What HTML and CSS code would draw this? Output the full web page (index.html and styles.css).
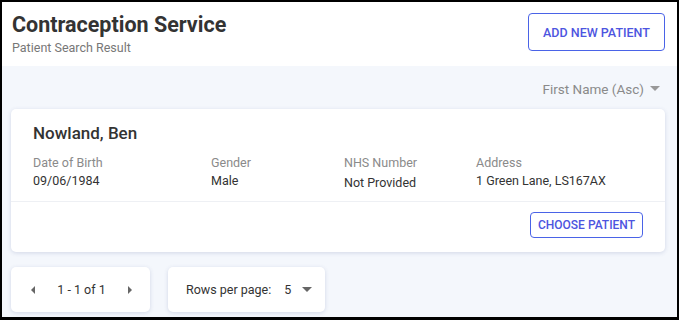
FILE: index.html
```html
<!DOCTYPE html>
<html lang="en">
<head>
    <meta charset="UTF-8">
    <title>Contraception Service</title>
    <link rel="stylesheet" href="styles.css">
</head>
<body>
    <div class="Page">
        <header class="Page-header">
            <div class="Page-titles">
                <h1 class="Page-title">Contraception Service</h1>
                <p class="Page-subtitle">Patient Search Result</p>
            </div>
            <button class="Btn Btn--large">ADD NEW PATIENT</button>
        </header>

        <main class="Results">
            <div class="Results-sort">
                <span>First Name (Asc)</span>
                <span class="Caret Caret--down"></span>
            </div>

            <div class="Card">
                <div class="Card-body">
                    <h2 class="Card-name">Nowland, Ben</h2>
                    <div class="Card-fields">
                        <div class="Field Field--dob">
                            <div class="Field-label">Date of Birth</div>
                            <div class="Field-value">09/06/1984</div>
                        </div>
                        <div class="Field Field--gender">
                            <div class="Field-label">Gender</div>
                            <div class="Field-value">Male</div>
                        </div>
                        <div class="Field Field--nhs">
                            <div class="Field-label">NHS Number</div>
                            <div class="Field-value Field-value--low">Not Provided</div>
                        </div>
                        <div class="Field">
                            <div class="Field-label">Address</div>
                            <div class="Field-value">1 Green Lane, LS167AX</div>
                        </div>
                    </div>
                </div>
                <div class="Card-actions">
                    <button class="Btn Btn--small">CHOOSE PATIENT</button>
                </div>
            </div>

            <div class="Pager">
                <div class="Pager-box Pager-box--nav">
                    <span class="Caret Caret--left"></span>
                    <span>1 - 1 of 1</span>
                    <span class="Caret Caret--right"></span>
                </div>
                <div class="Pager-box Pager-box--rows">
                    <span>Rows per page:</span>
                    <span class="Pager-count">5</span>
                    <span class="Caret Caret--down Caret--dark"></span>
                </div>
            </div>
        </main>
    </div>
</body>
</html>
```

FILE: styles.css
```css
* {
    margin: 0;
    padding: 0;
    box-sizing: border-box;
}

html, body {
    height: 100%;
    background: #000;
}

body {
    padding: 2px 2px 3px 2px;
    font-family: Roboto, "Liberation Sans", sans-serif;
    overflow: hidden;
}

.Page {
    height: 100%;
    display: flex;
    flex-direction: column;
    background: #f4f7fc;
}

.Page-header {
    height: 64px;
    flex-shrink: 0;
    display: flex;
    justify-content: space-between;
    align-items: flex-start;
    padding: 11px 12px 0 10px;
    background: #fff;
}

.Page-title {
    font-size: 21.5px;
    font-weight: 700;
    color: #333;
    line-height: 24px;
}

.Page-subtitle {
    margin-top: 3px;
    font-size: 12.5px;
    color: #777;
}

.Btn {
    background: #fff;
    border: 1px solid #4a63e7;
    border-radius: 4px;
    color: #4d55e0;
    font-family: Roboto, "Liberation Sans", sans-serif;
    font-weight: 500;
    white-space: nowrap;
    cursor: pointer;
}

.Btn--large {
    width: 137px;
    height: 38px;
    font-size: 12.5px;
}

.Btn--small {
    width: 113px;
    height: 26px;
    font-size: 12px;
}

.Results {
    flex: 1;
    padding: 0 12px 0 9px;
}

.Results-sort {
    height: 43px;
    display: flex;
    justify-content: flex-end;
    align-items: center;
    gap: 6px;
    padding: 2px 5px 0 0;
    font-size: 13.5px;
    color: #8a8a8a;
}

.Caret {
    display: inline-block;
    flex-shrink: 0;
    width: 0;
    height: 0;
}

.Caret--down {
    border-left: 5px solid transparent;
    border-right: 5px solid transparent;
    border-top: 5px solid #999;
}

.Caret--dark {
    border-top-color: #666;
}

.Caret--left {
    border-top: 4px solid transparent;
    border-bottom: 4px solid transparent;
    border-right: 4px solid #666;
}

.Caret--right {
    border-top: 4px solid transparent;
    border-bottom: 4px solid transparent;
    border-left: 4px solid #666;
}

.Card {
    background: #fff;
    border-radius: 5px;
    box-shadow: 0 1px 4px rgba(60, 80, 140, 0.18);
}

.Card-body {
    padding: 14px 22px 0 22px;
    height: 93px;
    border-bottom: 1px solid #eef0f4;
}

.Card-name {
    font-size: 17px;
    font-weight: 500;
    color: #333;
    line-height: 20px;
}

.Card-fields {
    display: flex;
    margin-top: 12px;
}

.Field {
    font-size: 12.5px;
}

.Field--dob {
    width: 178px;
}

.Field--gender {
    width: 133px;
}

.Field--nhs {
    width: 132px;
}

.Field-label {
    color: #8a8a8a;
    line-height: 16px;
}

.Field-value {
    color: #333;
    line-height: 18px;
    margin-top: 1px;
}

.Field-value--low {
    margin-top: 3px;
}

.Card-actions {
    height: 50px;
    display: flex;
    justify-content: flex-end;
    align-items: flex-start;
    padding: 10px 22px 0 0;
}

.Pager {
    display: flex;
    gap: 18px;
    margin-top: 15px;
}

.Pager-box {
    height: 45px;
    display: flex;
    align-items: center;
    flex-shrink: 0;
    white-space: nowrap;
    background: #fff;
    border-radius: 5px;
    box-shadow: 0 1px 4px rgba(60, 80, 140, 0.18);
    font-size: 12.5px;
    color: #333;
}

.Pager-box--nav {
    width: 139px;
    padding: 0 18px 0 20px;
    justify-content: space-between;
}

.Pager-box--rows {
    width: 157px;
    padding: 0 15px 0 18px;
}

.Pager-count {
    margin-left: 13px;
    margin-right: 11px;
}
```
